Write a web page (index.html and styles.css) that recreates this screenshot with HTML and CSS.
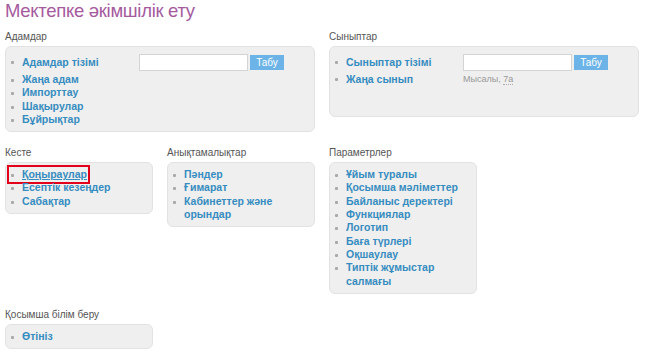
FILE: index.html
```html
<!DOCTYPE html>
<html lang="kk">
<head>
<meta charset="utf-8">
<title>Мектепке әкімшілік ету</title>
<link rel="stylesheet" href="styles.css">
</head>
<body>
<h1 class="title">Мектепке әкімшілік ету</h1>
<div class="grid">
  <section class="section span2">
    <h2 class="label">Адамдар</h2>
    <div class="box">
      <ul class="links">
        <li class="row-form"><a href="#" class="col-link">Адамдар тізімі</a><form class="search"><input type="text" class="search-input"><button type="button" class="search-btn">Табу</button></form></li>
        <li><a href="#">Жаңа адам</a></li>
        <li><a href="#">Импорттау</a></li>
        <li><a href="#">Шақырулар</a></li>
        <li><a href="#">Бұйрықтар</a></li>
      </ul>
    </div>
  </section>
  <section class="section span2">
    <h2 class="label">Сыныптар</h2>
    <div class="box box-classes">
      <ul class="links">
        <li class="row-form"><a href="#" class="col-link">Сыныптар тізімі</a><form class="search"><input type="text" class="search-input"><button type="button" class="search-btn">Табу</button></form></li>
        <li class="row-hint"><a href="#" class="col-link">Жаңа сынып</a><span class="hint">Мысалы, <span class="hint-ex">7а</span></span></li>
      </ul>
    </div>
  </section>

  <section class="section">
    <h2 class="label">Кесте</h2>
    <div class="box">
      <ul class="links">
        <li class="marked"><a href="#" class="active">Қоңыраулар</a></li>
        <li><a href="#">Есептік кезеңдер</a></li>
        <li><a href="#">Сабақтар</a></li>
      </ul>
    </div>
  </section>
  <section class="section">
    <h2 class="label">Анықтамалықтар</h2>
    <div class="box">
      <ul class="links">
        <li><a href="#">Пәндер</a></li>
        <li><a href="#">Ғимарат</a></li>
        <li><a href="#">Кабинеттер және орындар</a></li>
      </ul>
    </div>
  </section>
  <section class="section">
    <h2 class="label">Параметрлер</h2>
    <div class="box">
      <ul class="links">
        <li><a href="#">Ұйым туралы</a></li>
        <li><a href="#">Қосымша мәліметтер</a></li>
        <li><a href="#">Байланыс деректері</a></li>
        <li><a href="#">Функциялар</a></li>
        <li><a href="#">Логотип</a></li>
        <li><a href="#">Баға түрлері</a></li>
        <li><a href="#">Оқшаулау</a></li>
        <li><a href="#">Типтік жұмыстар салмағы</a></li>
      </ul>
    </div>
  </section>

  <section class="section row3">
    <h2 class="label">Қосымша білім беру</h2>
    <div class="box">
      <ul class="links">
        <li><a href="#">Өтініз</a></li>
      </ul>
    </div>
  </section>
</div>
</body>
</html>
```

FILE: styles.css
```css
html, body {
  margin: 0;
  padding: 0;
  background: #ffffff;
}
body {
  font-family: "Liberation Sans", Arial, sans-serif;
  color: #555;
}
.title {
  margin: 0 0 9px 0;
  padding-left: 5px;
  font-size: 18.5px;
  line-height: 22px;
  letter-spacing: -0.3px;
  font-weight: normal;
  color: #a55a9e;
}
.grid {
  display: grid;
  grid-template-columns: repeat(4, 148px);
  column-gap: 14px;
  row-gap: 15px;
  padding-left: 5px;
  align-items: start;
}
.span2 {
  grid-column: span 2;
}
.row3 {
  grid-column: 1 / 2;
}
.label {
  margin: 0 0 3px 0;
  font-size: 10px;
  line-height: 12px;
  font-weight: normal;
  color: #555;
}
.box {
  box-sizing: border-box;
  background: #efefef;
  border: 1px solid #e2e2e2;
  border-radius: 6px;
  padding: 5px 4px 5px 4px;
}
.box-classes {
  min-height: 71px;
}
.links {
  list-style: none;
  margin: 0;
  padding: 0;
}
.links li {
  position: relative;
  padding-left: 12px;
  font-size: 10.5px;
  line-height: 13.3px;
  font-weight: bold;
}
.links li::before {
  content: "";
  position: absolute;
  left: 1px;
  top: 6px;
  width: 3px;
  height: 3px;
  border-radius: 1px;
  background: #a9a9a9;
}
.links a {
  color: #358cc0;
  text-decoration: none;
}
.links a.active {
  text-decoration: underline;
}
.links .row-form, .links .row-hint {
  display: flex;
  align-items: center;
}
.links .row-form {
  height: 21px;
}
.links .row-form::before, .links .row-hint::before {
  top: 50%;
  margin-top: -2px;
}
.links .col-link {
  width: 117px;
  flex: none;
}
.search {
  display: flex;
  align-items: center;
  gap: 2px;
  margin: 0;
}
.search-input {
  box-sizing: border-box;
  width: 109px;
  height: 17px;
  margin: 0;
  border: 1px solid #d4d4d4;
  background: #fff;
  padding: 0 3px;
}
.search-btn {
  box-sizing: border-box;
  width: 34px;
  height: 15px;
  margin: 0;
  padding: 0;
  border: none;
  background: #6cb4e8;
  color: #fff;
  font-family: "Liberation Sans", Arial, sans-serif;
  font-size: 10px;
  line-height: 15px;
}
.hint {
  font-size: 9px;
  font-weight: normal;
  color: #999;
}
.hint-ex {
  border-bottom: 1px dotted #aaa;
}
.links .marked {
  width: fit-content;
  outline: 2px solid #e3001b;
  outline-offset: 1px;
}
```
